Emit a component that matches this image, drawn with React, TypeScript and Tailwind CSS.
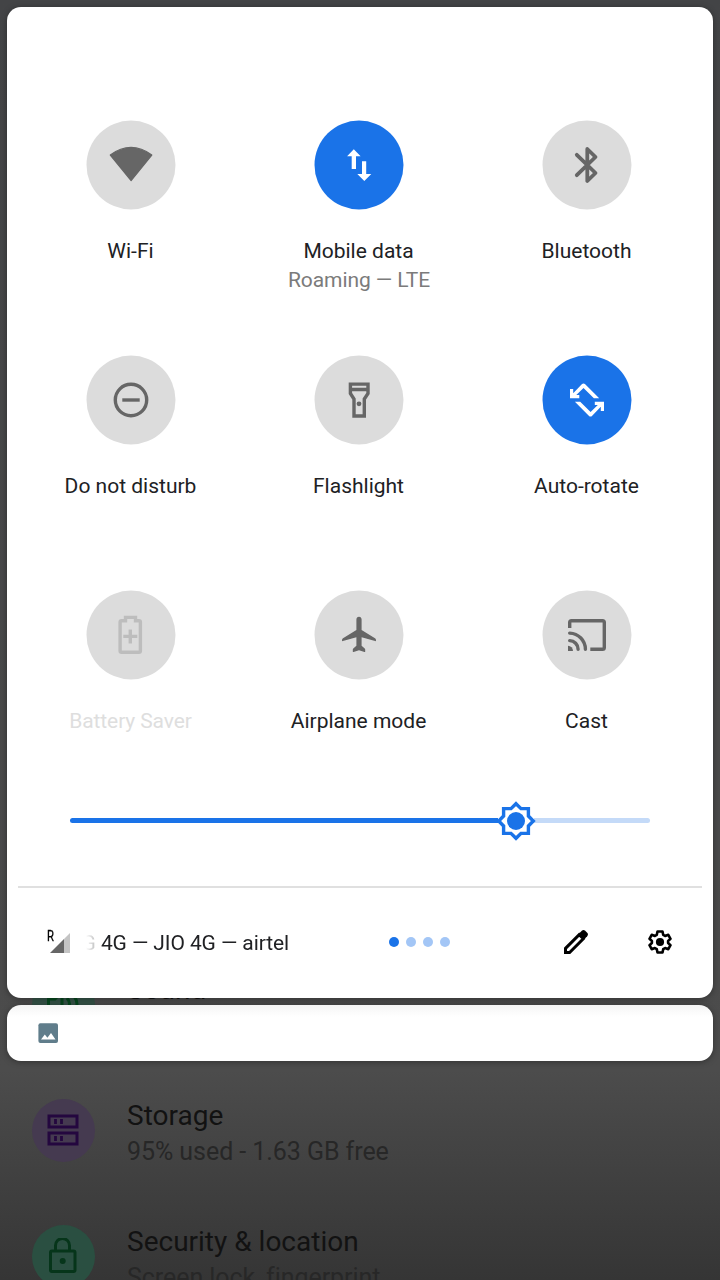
import type { ReactNode } from "react";

type TileProps = {
  label: string;
  detail?: string;
  state?: "off" | "on" | "disabled";
  children: ReactNode;
};

const circleFills = {
  off: "fill-[#dcdcdc]",
  on: "fill-[#1a73e8]",
  disabled: "fill-[#dcdcdc]",
};

const iconColors = {
  off: "text-[#666666]",
  on: "text-white",
  disabled: "text-[#bdbdbd]",
};

function Tile({ label, detail, state = "off", children }: TileProps) {
  return (
    <button className="flex h-[235px] w-[228px] flex-col items-center">
      <svg
        viewBox="-21 -21 90 90"
        className={`size-[90px] shrink-0 ${iconColors[state]}`}
        fill="none"
        stroke="currentColor"
        strokeWidth="3.4"
      >
        <circle cx="24" cy="24" r="44.5" stroke="none" className={circleFills[state]} />
        {children}
      </svg>
      <span
        className={`mt-[27px] pr-px text-[21px] leading-[29px] whitespace-nowrap ${
          state === "disabled" ? "tracking-[-0.12px] text-[#dedede]" : "text-[#202124]"
        }`}
      >
        {label}
      </span>
      {detail && (
        <span className="text-[21px] leading-[29px] tracking-[-0.08px] whitespace-nowrap text-[#7b7b7b]">{detail}</span>
      )}
    </button>
  );
}

function SettingsRow({ title, summary, circle, children }: { title: string; summary: string; circle: string; children: ReactNode }) {
  return (
    <div className="flex h-[126px] shrink-0 items-center pl-8">
      <span className={`flex size-[63px] shrink-0 items-center justify-center rounded-full pr-px ${circle}`}>
        <svg viewBox="0 0 36 36" className="size-9" fill="none" stroke="currentColor" strokeWidth="3">
          {children}
        </svg>
      </span>
      <div className="ml-8 flex flex-col pt-[6px] whitespace-nowrap">
        <span className="text-[28px] leading-[37px] text-[#121212]">{title}</span>
        <span className="text-[25px] leading-[35px] tracking-[-0.06px] text-[#272727]">{summary}</span>
      </div>
    </div>
  );
}

export default function App() {
  return (
    <div className="grid h-[1280px] w-[720px] overflow-hidden bg-[#4b4b4b] font-['Roboto',sans-serif]">
      <div className="col-start-1 row-start-1 h-[1280px] overflow-hidden bg-[linear-gradient(to_bottom,#434446_0px,#4b4b4b_980px,#4c4c4c_1070px,#353535_1280px)] pt-[941px]">
        <SettingsRow title="Sound" summary="Volume, vibration, Do Not Disturb" circle="bg-[#355347] text-[#07481f]">
          <path d="M3.5 13H10l7-7v24l-7-7H3.5z" />
          <path d="M22 12q5 6 0 12M24 5q16 13 0 26" />
        </SettingsRow>
        <SettingsRow title="Storage" summary="95% used - 1.63 GB free" circle="bg-[#453a50] text-[#24073f]">
          <path d="M4 4h28v11H4zM4 21h28v11H4z" />
          <path d="M10.5 7v5M16.5 7v5M10.5 24v5M16.5 24v5" strokeWidth="2.8" />
        </SettingsRow>
        <SettingsRow title="Security & location" summary="Screen lock, fingerprint" circle="bg-[#2a4f41] text-[#06351a]">
          <rect x="5.5" y="13" width="24.5" height="20.5" rx="1.5" />
          <path d="M10.5 13V7.5a7 7 0 0 1 14 0V13" />
          <circle cx="17.7" cy="23" r="3" fill="currentColor" stroke="none" />
        </SettingsRow>
      </div>

      <div className="z-10 col-start-1 row-start-1 flex flex-col gap-[7px] p-[7px]">
        <section className="flex h-[991px] shrink-0 flex-col rounded-[14px] bg-white shadow-[0_1px_6px_rgba(0,0,0,0.35)]">
          <div className="ml-[10px] grid h-[777px] w-[684px] grid-cols-3 content-start pt-[113px]">
            <Tile label="Wi-Fi">
              <path d="M3.3 14Q24-1.2 44.8 14L24.1 39.500Z" fill="currentColor" strokeWidth="1.2" strokeLinejoin="round" />
            </Tile>
            <Tile label="Mobile data" detail="Roaming — LTE" state="on">
              <path
                d="M18.8 8.3l6.8 6.9H21V28h-4.3V15.2h-4.6zM27 20.3h4.2v12.6h5.1L29.3 40l-7-7.1H27z"
                fill="currentColor"
                stroke="none"
              />
            </Tile>
            <Tile label="Bluetooth">
              <path d="M13.8 13.8 32.5 32l-8.2 8V8l8.2 8-18.7 18.2" strokeWidth="3.8" strokeLinecap="round" strokeLinejoin="round" />
            </Tile>
            <Tile label="Do not disturb">
              <circle cx="24" cy="24" r="15.7" />
              <path d="M15.3 24h17.4" />
            </Tile>
            <Tile label="Flashlight">
              <path d="M15.4 8.1H33v9.4L29.3 23v17H19V23l-3.6-5.5zM15.4 13.5H33" />
              <circle cx="24" cy="27.8" r="2.4" fill="currentColor" stroke="none" />
            </Tile>
            <Tile label="Auto-rotate" state="on">
              <path
                d="M36.2 22.3h-5.3L20.5 11.9l-7.200 7.200h3V22.300H7V13h3.200v4.200L18.800 8.300q1.700-1.800 3.400 0zM11.900 25.700h5.300L27.600 36.100l7.200-7.200h-3V25.700H41V35h-3.200v-4.200l-8.600 8.900q-1.700 1.800-3.400 0z"
                fill="currentColor"
                stroke="none"
              />
            </Tile>
            <Tile label="Battery Saver" state="disabled">
              <path d="M18.5 9.7V6.4h10v3.3h3.4q1.5 0 1.5 1.5v28.6q0 1.5-1.5 1.5H14.6q-1.5 0-1.5-1.5V11.2q0-1.5 1.5-1.5z" />
              <path d="M16.3 25.4h14M23.3 18.4v14" />
            </Tile>
            <Tile label="Airplane mode">
              <path
                d="M24 5.7c1.6 0 2.6 1.2 2.6 2.7V18.9L40 27.2q1 .7 1 2v.3q0 .8-.9.6L26.600 26.200V34.800L29.700 37.500q.5.500.5 1.300v1.600q0 .6-.7.500L24 39.200l-5.500 1.700q-.7.100-.7-.5v-1.600q0-.8.500-1.300l3.100-2.700V26.200L7.900 30.100q-.9.200-.9-.6v-.3q0-1.300 1-2l13.400-8.300V8.400c0-1.500 1-2.700 2.600-2.700z"
                fill="currentColor"
                stroke="none"
              />
            </Tile>
            <Tile label="Cast">
              <path d="M6.7 17v-5.500q0-1.800 1.800-1.800h31q1.800 0 1.800 1.800v25q0 1.800-1.800 1.800H27.300" />
              <path d="M6.700 22.100A16.200 16.200 0 0 1 22.400 38.300M6.700 29.600A8.700 8.700 0 0 1 15.100 38.300" strokeLinecap="round" />
              <path d="M5 34.700a5.300 5.300 0 0 1 5 5.300H5z" fill="currentColor" stroke="none" />
            </Tile>
          </div>

          <div className="ml-[63px] flex h-[73px] w-[580px] items-center">
            <div className="h-[5px] w-[428px] rounded-l-full bg-[#1a73e8]" />
            <svg viewBox="0 0 40 40" className="z-10 -mr-0.5 -ml-0.5 size-10 shrink-0" fill="none">
              <path
                d="M20 2.700 25 7.600H32.400V15L37.300 20 32.400 25V32.400H25L20 37.300 15 32.400H7.600V25L2.700 20 7.600 15V7.600H15z"
                fill="#fff"
                stroke="#1a73e8"
                strokeWidth="3.4"
              />
              <circle cx="20" cy="20" r="9" fill="#1a73e8" />
            </svg>
            <div className="h-[5px] flex-1 rounded-r-full bg-[#c4daf8]" />
          </div>

          <div className="mt-[29px] ml-[11px] h-0.5 w-[684px] bg-[#e0e0e0]" />

          <footer className="flex h-[108px] items-center">
            <div className="ml-[40px] flex h-6 w-[23px] items-start">
              <span className="w-[3px] origin-left scale-x-[0.8] text-[14px] leading-[13px] text-black [-webkit-text-stroke:0.3px_#000]">R</span>
              <svg viewBox="0 0 20 20" className="mt-[3px] size-5 shrink-0">
                <path d="M14 6V20H0z" fill="#666" />
                <path d="M14 6 20 0V20H14z" fill="#c4c4c4" />
              </svg>
            </div>
            <div className="ml-4 flex w-[203px] justify-end overflow-hidden pt-0.5 text-[21px] leading-[30px] tracking-[-0.1px] whitespace-nowrap text-[#202124] [mask-image:linear-gradient(to_right,transparent_0px,rgba(0,0,0,.3)_10px,#000_16px)]">
              G 4G — JIO 4G — airtel
            </div>
            <div className="ml-[99.5px] flex gap-[7px]">
              <span className="size-[10px] rounded-full bg-[#1a73e8]" />
              <span className="size-[10px] rounded-full bg-[#a3c6f6]" />
              <span className="size-[10px] rounded-full bg-[#a3c6f6]" />
              <span className="size-[10px] rounded-full bg-[#a3c6f6]" />
            </div>
            <svg viewBox="0 0 24 24" className="ml-[114.5px] size-6" fill="none">
              <path d="M1.5 18.4 15.2 4.7l4.1 4.1L5.6 22.5H1.5z" stroke="#000" strokeWidth="3" />
              <path d="m14.3 4.3 3.5-3.500q1.700-1.500 3.400 0l2 2q1.500 1.700 0 3.400l-3.500 3.500z" fill="#000" />
            </svg>
            <svg viewBox="0 0 24 24" className="ml-[60px] size-6" fill="none">
              <path
                d="M9.5 1.5h5l.7 3.3 1.9 1.1 3.2-1.1 2.2 4-2.4 2.1v2.2l2.4 2.1-2.2 4-3.2-1.1-1.9 1.1-.7 3.300h-5l-.7-3.300-1.900-1.100-3.200 1.100-2.200-4 2.400-2.100v-2.200L1.500 8.800l2.200-4 3.200 1.100 1.900-1.100z"
                stroke="#000"
                strokeWidth="2.6"
                strokeLinejoin="round"
              />
              <circle cx="12" cy="12" r="4.1" fill="#000" />
            </svg>
          </footer>
        </section>

        <section className="flex h-14 shrink-0 items-center rounded-[14px] bg-[linear-gradient(to_bottom,#f5f5f5_0px,#ffffff_12px)] pl-[31px] shadow-[0_1px_6px_rgba(0,0,0,0.35)]">
          <svg viewBox="0 0 20 20" className="size-5">
            <rect x="0.4" y="0.3" width="19.6" height="19.6" rx="2" fill="#607d8b" />
            <path d="m3 16.5 3.8-5 2.6 3.2 3.6-4.7 4.5 6.5z" fill="#fff" />
          </svg>
        </section>
      </div>
    </div>
  );
}
